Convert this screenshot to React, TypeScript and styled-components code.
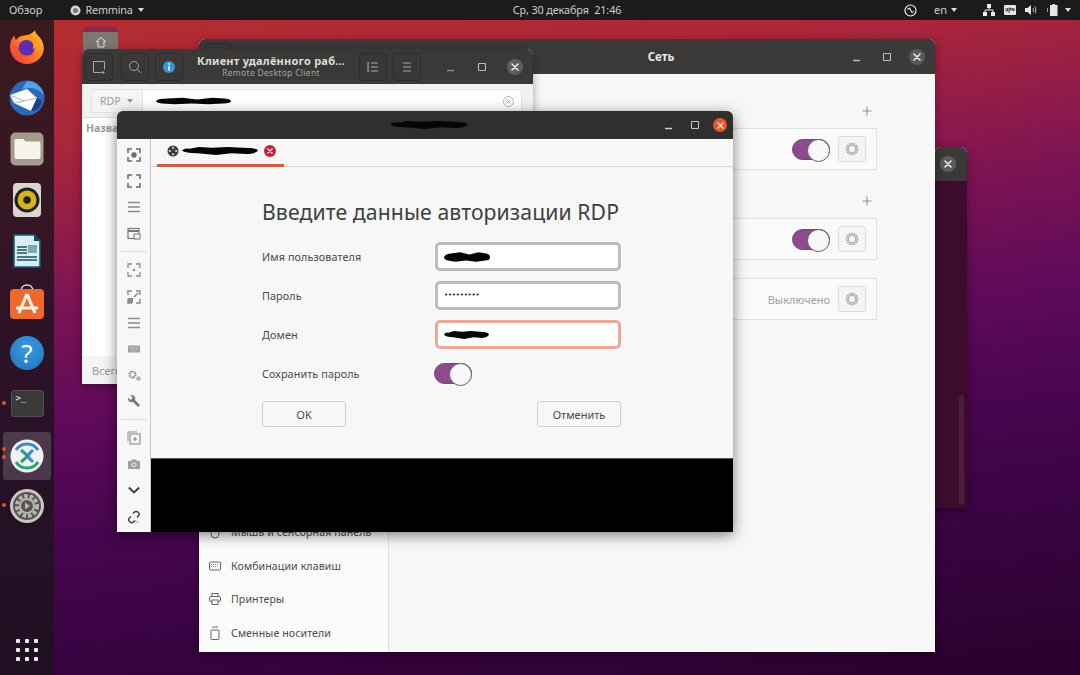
import React from "react";
import styled, { createGlobalStyle } from "styled-components";

const Global = createGlobalStyle`
  html, body { margin: 0; padding: 0; width: 1080px; height: 675px; overflow: hidden; background: #2c0028; }
  * { box-sizing: border-box; }
  #root { width: 1080px; height: 675px; }
`;

const Desktop = styled.div`
  position: relative; width: 1080px; height: 675px; overflow: hidden;
  display: flex; flex-direction: column;
  font-family: "Noto Sans", "Open Sans", sans-serif;
  background: linear-gradient(172deg, #b62f2c 0%, #ab263a 18%, #7e1453 37%, #5f0a5a 52%, #46054d 67%, #370340 82%, #29002b 100%);
`;

const TopBar = styled.div`
  height: 20px; flex: none; background: #1c1b1b; color: #cfcfcf; font-size: 11px;
  display: grid; grid-template-columns: 1fr auto 1fr; align-items: center; position: relative; z-index: 5;
`;
const BarLeft = styled.div`display: flex; align-items: center; padding-left: 9px;`;
const BarCenter = styled.div`padding-left: 54px; font-size: 10.8px; letter-spacing: -.1px; white-space: pre; line-height: 20px;`;
const BarRight = styled.div`display: flex; align-items: center; justify-content: flex-end; padding-right: 9px;`;
const BarItem = styled.span<{ $l?: number }>`
  margin-left: ${(p) => p.$l ?? 0}px; display: inline-flex; align-items: center; line-height: 20px; white-space: nowrap;
`;
const AppName = styled(BarItem)`font-size: 10.8px; letter-spacing: -.2px;`;
const Caret = styled.i<{ $l?: number; $c?: string }>`
  display: inline-block; margin-left: ${(p) => p.$l ?? 5}px; width: 0; height: 0;
  border-left: 3.5px solid transparent; border-right: 3.5px solid transparent; border-top: 4px solid ${(p) => p.$c ?? "#dcdcdc"};
`;

const Dock = styled.div`
  position: absolute; left: 0; top: 20px; bottom: 0; width: 54px; z-index: 4;
  background: rgba(28, 20, 28, 0.8);
  display: flex; flex-direction: column; align-items: center; padding-top: 1px;
`;
const DockSlot = styled.div`
  position: relative; width: 48px; height: 51px; display: flex; align-items: center; justify-content: center; flex: none;
`;
const ActiveTile = styled.div`
  width: 48px; height: 48px; margin-top: 2px; border-radius: 3px; background: rgba(255,255,255,.17);
  display: flex; align-items: center; justify-content: center;
`;
const RunDot = styled.i<{ $y: number }>`
  position: absolute; left: -1px; top: ${(p) => p.$y}px; width: 4px; height: 4px; border-radius: 50%; background: #d9552b;
`;
const AppGrid = styled.div`
  margin-top: auto; margin-bottom: 14px; display: grid; grid-template-columns: repeat(3, 4px); gap: 5px;
  & > i { width: 4px; height: 4px; background: #f2eeef; border-radius: 1px; }
`;

const Win = styled.div<{ $x: number; $y: number; $w: number; $h: number; $strong?: boolean }>`
  position: absolute; left: ${(p) => p.$x}px; top: ${(p) => p.$y}px; width: ${(p) => p.$w}px; height: ${(p) => p.$h}px;
  border-radius: 6px 6px 0 0; overflow: hidden; display: flex; flex-direction: column;
  box-shadow: ${(p) => (p.$strong ? "0 3px 14px rgba(0,0,0,.5)" : "0 2px 8px rgba(0,0,0,.35)")};
  background: #f7f7f7;
`;
const Head = styled.div<{ $h: number; $bg: string }>`
  height: ${(p) => p.$h}px; flex: none; background: ${(p) => p.$bg}; display: flex; align-items: center; position: relative;
  color: #eee;
`;
const HeadGap = styled.div`flex: 1;`;
const HeadBtn = styled.div<{ $l?: number }>`
  width: 28px; height: 28px; margin-left: ${(p) => p.$l ?? 0}px; border-radius: 4px; border: 1px solid #2d2c2b; background: #393836;
  display: flex; align-items: center; justify-content: center; flex: none;
`;
const Ctl = styled.div<{ $w: number; $bg?: string; $d?: number; $l?: number }>`
  width: ${(p) => p.$w}px; margin-left: ${(p) => p.$l ?? 0}px; display: flex; justify-content: center; align-items: center; flex: none;
  & > span {
    width: ${(p) => p.$d ?? 16}px; height: ${(p) => p.$d ?? 16}px; border-radius: 50%; background: ${(p) => p.$bg ?? "transparent"};
    display: flex; align-items: center; justify-content: center;
  }
`;

const TitleBlock = styled.div`
  flex: 1; text-align: center; line-height: 1.15; min-width: 0;
`;
const TitleMain = styled.div`font-size: 11px; font-weight: 700; color: #dedddb; letter-spacing: .25px; white-space: nowrap;`;
const TitleSub = styled.div`font-size: 8.5px; color: #a5a4a2; letter-spacing: .3px; margin-top: 1px;`;
const CenterTitle = styled.div`
  position: absolute; left: 0; right: 0; text-align: center; font-size: 11.5px; font-weight: 700; color: #e6e6e4; padding-left: 188px;
`;
const HeadRedact = styled.div`
  position: absolute; left: 273px; top: 9px; display: flex;
`;

/* Remmina main */
const RemBar = styled.div`
  height: 34px; flex: none; background: #f1f1f0; border-bottom: 1px solid #dcdcdc; padding: 5px 11px 4px 9px; display: flex;
`;
const Combo = styled.div`
  width: 52px; background: #f4f4f3; border: 1px solid #e3e3e3; border-radius: 3px 0 0 3px; color: #9c9c9c; font-size: 10.5px;
  display: flex; align-items: center; padding-left: 8px;
`;
const UrlBox = styled.div`
  flex: 1; background: #fff; border: 1px solid #e3e3e3; border-left: 0; border-radius: 0 3px 3px 0;
  display: flex; align-items: center; padding: 0 6px 0 13px; justify-content: space-between;
`;
const RemList = styled.div`flex: 1; background: #fff; padding: 3px 4px; `;
const RemCol = styled.div`font-size: 10.5px; font-weight: 700; color: #9a9a9a;`;
const RemFoot = styled.div`
  height: 28px; flex: none; background: #f4f4f3; color: #9a9a9a; font-size: 11px; padding: 0 10px; display: flex; align-items: center;
`;

/* Settings */
const SetBody = styled.div`flex: 1; display: flex; min-height: 0;`;
const Side = styled.div`
  width: 190px; flex: none; background: #fbfbfb; border-right: 1px solid #dedede;
  display: flex; flex-direction: column; justify-content: flex-end; padding-bottom: 2px;
`;
const SideItem = styled.div`
  height: 33.7px; display: flex; align-items: center; gap: 10px; padding-left: 10px; color: #4b4b4b; font-size: 10.6px; letter-spacing: .1px; white-space: nowrap;
`;
const SetMain = styled.div`
  flex: 1; background: #f7f7f7; padding: 29px 58px 0 58px; display: flex; flex-direction: column;
`;
const PlusRow = styled.div<{ $t?: number }>`
  height: 16px; margin-top: ${(p) => p.$t ?? 0}px; margin-bottom: 9px; display: flex; justify-content: flex-end; padding-right: 5px;
`;
const NetRow = styled.div<{ $t?: number }>`
  height: 42px; flex: none; margin-top: ${(p) => p.$t ?? 0}px; background: #fafafa; border: 1px solid #dfdfdf;
  display: flex; align-items: center; justify-content: flex-end; gap: 8px; padding-right: 10px;
`;
const Off = styled.span`font-size: 11px; color: #a0a0a0; margin-left: -1px;`;
const GearBtn = styled.div`
  width: 28px; height: 26px; background: #f5f5f5; border: 1px solid #dcdcdc; border-radius: 3px;
  display: flex; align-items: center; justify-content: center;
`;
const Toggle = styled.div`
  width: 38px; height: 21px; border-radius: 11px; background: #8e4a8e; border: 1px solid #6b4a6b; position: relative; flex: none;
  &::after {
    content: ""; position: absolute; right: -1px; top: -1px; width: 21px; height: 21px; border-radius: 50%;
    background: #f8f8f8; border: 1px solid #6b5a6b;
  }
`;
const FormToggle = styled(Toggle)`margin-left: -1px;`;

/* Terminal */
const TermBody = styled.div`flex: 1; background: #3d0b2c; display: flex; justify-content: flex-end; align-items: flex-end; padding: 0 3px 3px 0;`;
const TermScroll = styled.div`width: 5px; height: 110px; background: #4e1b3c; border-radius: 3px;`;

/* Remote window */
const Remote = styled.div`flex: 1; display: flex; min-height: 0;`;
const ToolRail = styled.div`
  width: 34px; flex: none; background: #f7f7f7; border-right: 1px solid #c9c9c9; display: flex; flex-direction: column; align-items: center; padding-top: 3px;
`;
const ToolBtn = styled.div`height: 26.2px; width: 100%; display: flex; align-items: center; justify-content: center; flex: none;`;
const ToolSep = styled.div`height: 1px; width: 26px; background: #dedede; margin: 4.5px 0 5px; flex: none;`;
const RemoteMain = styled.div`flex: 1; display: flex; flex-direction: column; min-width: 0;`;
const TabBar = styled.div`height: 28px; flex: none; background: #f7f7f7; border-bottom: 1px solid #d8d8d8; padding-left: 6px;`;
const Tab = styled.div`
  width: 127px; height: 28px; border-bottom: 3px solid #c9603a; display: flex; align-items: center; padding: 0 0 2px 10px; gap: 3px;
`;
const TabClose = styled.span`
  margin-left: 3px; width: 12px; height: 12px; border-radius: 50%; background: #c5213f; display: flex; align-items: center; justify-content: center;
`;
const FormWrap = styled.div`flex: 1; background: #f7f7f7; padding: 30px 112px 0 111px; display: flex; flex-direction: column;`;
const FormTitle = styled.h1`
  margin: 0 0 15px; font-size: 21.2px; line-height: 30px; font-weight: 400; color: #3f3f3f; white-space: nowrap; letter-spacing: .1px;
`;
const FormGrid = styled.div`display: grid; grid-template-columns: 173px 186px; grid-auto-rows: 29px; row-gap: 10px; align-items: center;`;
const Label = styled.label`font-size: 10.8px; color: #4a4a4a; letter-spacing: .1px; white-space: nowrap;`;
const Field = styled.div<{ $focus?: boolean }>`
  height: 29px; background: #fff; border: 3px solid ${(p) => (p.$focus ? "#e8ab96" : "#bdbdbd")}; border-radius: 5px;
  display: flex; align-items: center; padding-left: 6px;
`;
const Dots = styled.span`font-size: 7px; letter-spacing: -.2px; color: #222; line-height: 1; font-family: "DejaVu Sans", sans-serif;`;
const ButtonRow = styled.div`display: flex; justify-content: space-between; margin-top: 13px;`;
const Btn = styled.div`
  width: 84px; height: 26px; background: #f7f7f7; border: 1px solid #cfcfcf; border-radius: 3px; color: #4a4a4a; font-size: 11px;
  display: flex; align-items: center; justify-content: center;
`;
const Black = styled.div`height: 74px; flex: none; background: #000; border-top: 1px solid #555;`;

const HomeTile = styled.div`
  position: absolute; left: 83px; top: 27px; width: 35px; height: 30px; border-radius: 4px 4px 0 0; background: linear-gradient(#8a2a4a 0 5px, #7d7773 5px);
  display: flex; justify-content: center; padding-top: 9px;
`;
const ScribbleSvg = styled.svg`flex: none; display: block;`;

const Scribble = ({ w, h = 7, mid = false }: { w: number; h?: number; mid?: boolean }) => (
  <ScribbleSvg width={w} height={h} viewBox="0 0 100 10" preserveAspectRatio="none">
    <path
      d={mid
        ? "M0 5 Q3 2 10 3 L22 1 L40 2 L60 1 L80 2 Q98 2 100 5 Q98 8 85 9 L65 8 L45 10 L20 8 Q4 8 0 5Z"
        : "M0 5 Q4 2 15 2 L35 1 L55 3 L75 1 L92 2 Q100 3 100 5 Q100 8 90 8 L70 9 L48 8 L25 9 L8 8 Q0 7 0 5Z"}
      fill="#050505"
    />
  </ScribbleSvg>
);

const Close = ({ c = "#eee", s = 8 }: { c?: string; s?: number }) => (
  <svg width={s} height={s} viewBox="0 0 8 8"><path d="M1 1l6 6M7 1l-6 6" stroke={c} strokeWidth="1.5" strokeLinecap="round" /></svg>
);
const Min = ({ c = "#bbb" }: { c?: string }) => (
  <svg width="10" height="10" viewBox="0 0 10 10"><path d="M1 8.5h7" stroke={c} strokeWidth="1.4" /></svg>
);
const Max = ({ c = "#bbb" }: { c?: string }) => (
  <svg width="10" height="10" viewBox="0 0 10 10"><rect x="1.5" y="1.5" width="7" height="7" fill="none" stroke={c} strokeWidth="1.1" rx=".5" /></svg>
);
const Plus = () => (
  <svg width="10" height="16" viewBox="0 0 10 16"><path d="M5 3.5v9M.5 8h9" stroke="#8f8f8f" strokeWidth="1" /></svg>
);
const Gear = () => (
  <svg width="14" height="14" viewBox="0 0 14 14" fill="none">
    <circle cx="7" cy="7" r="5.4" stroke="#a3a3a3" strokeWidth="1.7" strokeDasharray="1.7 .7" />
    <circle cx="7" cy="7" r="3.8" stroke="#a3a3a3" strokeWidth="1" />
  </svg>
);

const tc = "#6d6d6d";
const Ti = ({ children }: { children: React.ReactNode }) => (
  <svg width="14" height="14" viewBox="0 0 14 14" fill="none" stroke={tc} strokeWidth="1.6">{children}</svg>
);
const Bars = () => (
  <Ti><path d="M1 2.5h12M1 7h12M1 11.5h12" stroke="#8b8b8b" strokeWidth="1.4" /></Ti>
);
const Corners = ({ gap = 5 }: { gap?: number }) => (
  <path d={`M1 ${gap}V1h4M9 1h4v4M13 9v4H9M5 13H1V9`} />
);

const Rail = () => (
  <ToolRail>
    <ToolBtn><Ti><Corners /><circle cx="7" cy="7" r="2.7" fill={tc} stroke="none" /></Ti></ToolBtn>
    <ToolBtn><Ti><Corners /></Ti></ToolBtn>
    <ToolBtn><Bars /></ToolBtn>
    <ToolBtn><Ti><rect x="1" y="1.5" width="11" height="10" stroke="#777" strokeWidth="1.2" /><path d="M1 4h11" stroke="#777" strokeWidth="2" /><rect x="7" y="7" width="6" height="5" fill="#f7f7f7" stroke="#777" strokeWidth="1" /></Ti></ToolBtn>
    <ToolSep />
    <ToolBtn><Ti><g stroke="#8b8b8b" strokeWidth="1.3"><Corners /></g><circle cx="7" cy="7" r="1.3" fill="#8b8b8b" stroke="none" /></Ti></ToolBtn>
    <ToolBtn><Ti><g stroke="#8b8b8b" strokeWidth="1.4"><Corners /></g><rect x="1" y="8" width="5" height="5" fill="#8b8b8b" stroke="none" /><path d="M7 7l4-4" stroke="#8b8b8b" /></Ti></ToolBtn>
    <ToolBtn><Bars /></ToolBtn>
    <ToolBtn><Ti><rect x="1" y="3.5" width="12" height="7" rx="1" fill="#9c9c9c" stroke="none" /><path d="M2.5 5.5h9M2.5 7h9M4 8.8h6" stroke="#ddd" strokeWidth=".8" strokeDasharray="1 .6" /></Ti></ToolBtn>
    <ToolBtn><Ti><circle cx="5.5" cy="6.5" r="3" stroke="#8b8b8b" strokeWidth="2.2" strokeDasharray="1.6 .7" /><circle cx="11.5" cy="10.5" r="1.5" stroke="#8b8b8b" strokeWidth="1.2" /></Ti></ToolBtn>
    <ToolBtn><Ti><path d="M1 3.500L3.500 6L5.800 3.800L3.200 1.200A3.700 3.700 0 0 1 8 6L13 11L11 13L6 8A3.700 3.700 0 0 1 1 3.500Z" fill="#7a7a7a" stroke="none" /></Ti></ToolBtn>
    <ToolSep />
    <ToolBtn><Ti><rect x="3" y="3" width="10" height="10" stroke="#8b8b8b" strokeWidth="1.1" /><path d="M1 10V1h9" stroke="#8b8b8b" strokeWidth="1" /><path d="M8 6v4M6 8h4" stroke="#8b8b8b" strokeWidth="1.2" /></Ti></ToolBtn>
    <ToolBtn><Ti><path d="M1 4h3l1-1.5h4L10 4h3v8H1z" fill="#a0a0a0" stroke="none" /><circle cx="7" cy="7.8" r="2" fill="#a0a0a0" stroke="#eee" strokeWidth="1" /></Ti></ToolBtn>
    <ToolBtn><Ti><path d="M1.8 4.500L7 9.500l5.200-5" stroke="#3e3e3e" strokeWidth="1.9" /></Ti></ToolBtn>
    <ToolBtn><Ti><path d="M6 3.500l1.200-1.200a2.800 2.800 0 0 1 4 4L10 7.500M4 6.500L2.600 7.800a2.800 2.800 0 0 0 4 4L8 10.500" stroke="#3e3e3e" strokeWidth="1.4" /><path d="M8 12l2-1M10 13.200l1.600-2" stroke="#888" strokeWidth=".8" /></Ti></ToolBtn>
  </ToolRail>
);

const Firefox = () => (
  <svg width="36" height="36" viewBox="0 0 36 36">
    <defs>
      <linearGradient id="ff1" x1="0" y1="1" x2="1" y2="0"><stop offset="0" stopColor="#ee2c3c" /><stop offset=".5" stopColor="#ff7a2b" /><stop offset="1" stopColor="#ffd22e" /></linearGradient>
    </defs>
    <path d="M26 1c0 4 5 6 7 11 3 6 2 13-2 17-3.500 4-8 6-13 6C8 35 1 27 1 18 1 13 2.500 9 5.500 6.500 5.500 8.500 6 10 7 11 9 8 12 6.500 15 6.500c4-.2 8-1.500 11-5.500z" fill="url(#ff1)" />
    <circle cx="17.500" cy="19" r="8" fill="#5d2fb0" />
    <path d="M9 14c3-4 9-5 13-2 3 2 3 6 1 8 4-1 6-6 3-11-4-4-12-4-17 5z" fill="#ff9a1e" />
    <path d="M4 17c1 7 7 12 14 11 5-.6 9-4 10-8-2 4-6 7-11 6.500C12 26 9 22 9 18z" fill="#f8542b" />
  </svg>
);
const Thunder = () => (
  <svg width="36" height="36" viewBox="0 0 36 36">
    <circle cx="18" cy="18" r="17.500" fill="#2a69b8" />
    <path d="M18 1c8 0 16 6 17 15-3-5-8-8-14-8-3 0-6 1-8 2 1-3 3-6 5-9z" fill="#4fa3e6" />
    <path d="M1 15l17-6 10 9-6 13-17-8z" fill="#fff" />
    <path d="M1 15l14 6 13-3M5 23l10-2" stroke="#aab6c8" strokeWidth="1" fill="none" />
    <path d="M22 31l6-13 5 3c-1 6-5 10-11 10z" fill="#1c3f83" />
  </svg>
);
const Files = () => (
  <svg width="34" height="34" viewBox="0 0 34 34">
    <rect x=".5" y=".5" width="33" height="33" rx="5" fill="#a59b8b" />
    <path d="M4.500 9a2 2 0 0 1 2-2h7l2 2.500h13a2 2 0 0 1 2 2V25a2 2 0 0 1-2 2h-22a2 2 0 0 1-2-2z" fill="#f6f3ec" />
  </svg>
);
const Rhythm = () => (
  <svg width="28" height="34" viewBox="0 0 28 34">
    <rect width="28" height="34" rx="4" fill="#d9d5cf" />
    <circle cx="14" cy="17" r="12.500" fill="#23211c" />
    <circle cx="14" cy="17" r="9.500" fill="#d5b31c" />
    <circle cx="14" cy="17" r="3.800" fill="#23211c" />
  </svg>
);
const Writer = () => (
  <svg width="28" height="34" viewBox="0 0 28 34">
    <path d="M1 1h20l6 6v26H1z" fill="#d8eef2" stroke="#1c5a70" strokeWidth="1.600" />
    <path d="M21 1v6h6z" fill="#18475f" />
    <path d="M4 13h10M4 16h10M4 19h10M4 23h20M4 26h20" stroke="#1c4f66" strokeWidth="1.400" />
    <rect x="15" y="11" width="9" height="8" fill="#7aa9bb" />
  </svg>
);
const Bag = () => (
  <svg width="34" height="36" viewBox="0 0 34 36">
    <path d="M11 7c0-8 12-8 12 0" fill="none" stroke="#e8e2dc" strokeWidth="1.600" />
    <rect y="5" width="34" height="30" rx="4" fill="#ed6a2c" />
    <path d="M17 10L9 29M17 10l8 19M6 24h22" stroke="#fdf1e6" strokeWidth="3.200" fill="none" />
  </svg>
);
const Help = styled.div`
  width: 34px; height: 34px; border-radius: 50%; background: radial-gradient(circle at 50% 35%, #3d9be0, #1f72bb);
  color: #fff; font-size: 26px; line-height: 34px; text-align: center;
`;
const Term = styled.div`
  width: 33px; height: 27px; background: #3a3a39; border-radius: 3px; color: #eee; font-size: 9px; line-height: 10px; padding: 2px 4px;
  font-family: "DejaVu Sans Mono", monospace; border: 1px solid #505050;
`;
const RemminaLogo = ({ s = 34 }: { s?: number }) => (
  <svg width={s} height={s} viewBox="0 0 34 34">
    <circle cx="17" cy="17" r="16.500" fill="#eef1f1" />
    <path d="M6 11a13 13 0 0 1 22 0" stroke="#3a86c8" strokeWidth="3" fill="none" />
    <path d="M28 23a13 13 0 0 1-22 0" stroke="#2aa46a" strokeWidth="3" fill="none" />
    <path d="M11 11l7 6-7 6" stroke="#2aa46a" strokeWidth="3" fill="none" />
    <path d="M23 11l-6 6 6 6" stroke="#3a86c8" strokeWidth="3" fill="none" />
  </svg>
);
const SettingsIcon = () => (
  <svg width="34" height="34" viewBox="0 0 34 34" fill="none">
    <circle cx="17" cy="17" r="17" fill="#c9c6c1" />
    <circle cx="17" cy="17" r="14" fill="#565451" />
    <circle cx="17" cy="17" r="10" stroke="#b9b6b1" strokeWidth="4" strokeDasharray="3.500 2" />
    <circle cx="17" cy="17" r="7" stroke="#b9b6b1" strokeWidth="2" />
    <path d="M15 13.500l5 3.500-5 3.500z" fill="#b9b6b1" />
  </svg>
);
const RemminaGlyph = () => (
  <svg width="11" height="11" viewBox="0 0 11 11">
    <circle cx="5.500" cy="5.500" r="5" fill="#d5d5d5" />
    <circle cx="5.500" cy="5.500" r="2.500" fill="#777" />
  </svg>
);

export default function App() {
  return (
    <Desktop>
      <Global />
      <TopBar>
        <BarLeft>
          <BarItem>Обзор</BarItem>
          <BarItem $l={27}><RemminaGlyph /></BarItem>
          <AppName $l={5}>Remmina<Caret /></AppName>
        </BarLeft>
        <BarCenter>Ср, 30 декабря  21:46</BarCenter>
        <BarRight>
          <BarItem>
            <svg width="13" height="13" viewBox="0 0 13 13" fill="none" stroke="#eee"><circle cx="6.500" cy="6.500" r="5.500" strokeWidth="1.200" /><path d="M3.500 5.500l2-1.500 2.500 4.500 1.500-1" strokeWidth="1.100" /></svg>
          </BarItem>
          <BarItem $l={17}>en<Caret $l={4} /></BarItem>
          <BarItem $l={26}>
            <svg width="12" height="12" viewBox="0 0 12 12" fill="#eee"><rect x="4" y="0" width="4" height="4" /><rect x="0" y="8" width="4" height="4" /><rect x="8" y="8" width="4" height="4" /><path d="M6 4v2M2 8V6h8v2" stroke="#eee" fill="none" /></svg>
          </BarItem>
          <BarItem $l={9}>
            <svg width="12" height="10" viewBox="0 0 12 10"><rect width="12" height="10" rx="1" fill="#e6e6e6" /><path d="M2 3v3h1.500V3M5 3v5M5 3h1.500v2H5M8 6V3l2 3V3" stroke="#222" strokeWidth=".8" fill="none" /></svg>
          </BarItem>
          <BarItem $l={9}>
            <svg width="12" height="10" viewBox="0 0 12 10" fill="none"><path d="M0 3h2.500L6 0v10L2.500 7H0z" fill="#e6e6e6" /><path d="M8 3q1 2 0 4M10 1.500q2 3.500 0 7" stroke="#bbb" /></svg>
          </BarItem>
          <BarItem $l={9}>
            <svg width="12" height="12" viewBox="0 0 12 12" fill="none"><rect x="4.500" y="1.500" width="6.500" height="10" fill="#e6e6e6" stroke="#e6e6e6" /><rect x="6.500" y="0" width="2.500" height="1.500" fill="#e6e6e6" /><path d="M1.500 4v4" stroke="#999" /></svg>
          </BarItem>
          <Caret $l={7} />
        </BarRight>
      </TopBar>

      <HomeTile>
        <svg width="12" height="12" viewBox="0 0 12 12" fill="none" stroke="#e6e6e6"><path d="M1 6l5-4.500L11 6M3 5v6h6V5" /></svg>
      </HomeTile>

      <Win $x={935} $y={147} $w={32} $h={361}>
        <Head $h={34} $bg="#3a3937">
          <Ctl $w={26} $bg="#5c5b59" $d={16}><span><Close /></span></Ctl>
        </Head>
        <TermBody><TermScroll /></TermBody>
      </Win>

      <Win $x={199} $y={39} $w={736} $h={613}>
        <Head $h={35} $bg="#3b3a38">
          <HeadBtn $l={5} />
          <CenterTitle>Сеть</CenterTitle>
          <HeadGap />
          <Ctl $w={30}><span><Min /></span></Ctl>
          <Ctl $w={30}><span><Max /></span></Ctl>
          <Ctl $w={30} $bg="#5c5b59"><span><Close /></span></Ctl>
          <Ctl $w={3} />
        </Head>
        <SetBody>
          <Side>
            <SideItem>
              <svg width="12" height="14" viewBox="0 0 12 14" fill="none" stroke="#666"><rect x="2" y="1" width="8" height="12" rx="4" /></svg>
              Мышь и сенсорная панель
            </SideItem>
            <SideItem>
              <svg width="12" height="14" viewBox="0 0 12 14" fill="none" stroke="#666"><rect x=".5" y="3" width="11" height="8" rx="1" /><path d="M2 5.500h8M2 7.500h8" strokeDasharray="1 1" strokeWidth=".8" /></svg>
              Комбинации клавиш
            </SideItem>
            <SideItem>
              <svg width="12" height="14" viewBox="0 0 12 14" fill="none" stroke="#666"><rect x="3" y="1.500" width="6" height="3" /><rect x=".5" y="4.500" width="11" height="5" rx="1.500" /><rect x="3" y="8" width="6" height="4.500" fill="#fbfbfb" /></svg>
              Принтеры
            </SideItem>
            <SideItem>
              <svg width="12" height="14" viewBox="0 0 12 14" fill="none" stroke="#666"><rect x="2" y="4" width="8" height="9.500" rx="1" /><path d="M3 1h6" /></svg>
              Сменные носители
            </SideItem>
          </Side>
          <SetMain>
            <PlusRow><Plus /></PlusRow>
            <NetRow><Toggle /><GearBtn><Gear /></GearBtn></NetRow>
            <PlusRow $t={23}><Plus /></PlusRow>
            <NetRow><Toggle /><GearBtn><Gear /></GearBtn></NetRow>
            <NetRow $t={18}><Off>Выключено</Off><GearBtn><Gear /></GearBtn></NetRow>
          </SetMain>
        </SetBody>
      </Win>

      <Win $x={82} $y={49} $w={451} $h={335}>
        <Head $h={35} $bg="#3a3937">
          <HeadBtn $l={3}>
            <svg width="14" height="14" viewBox="0 0 14 14" fill="none" stroke="#a9a8a6"><path d="M9.500 12.500h-8v-11h11v8" /><path d="M11 11v3M9.500 12.500h3" /></svg>
          </HeadBtn>
          <HeadBtn $l={8}>
            <svg width="14" height="14" viewBox="0 0 14 14" fill="none" stroke="#a9a8a6"><circle cx="6" cy="6" r="4.500" /><path d="M9.500 9.500l3.500 3.500" /></svg>
          </HeadBtn>
          <HeadBtn $l={6}>
            <svg width="14" height="14" viewBox="0 0 14 14"><circle cx="7" cy="7" r="6" fill="#3f92dc" /><path d="M7 6v4.500M7 3.200v1.500" stroke="#fff" strokeWidth="1.600" /></svg>
          </HeadBtn>
          <TitleBlock>
            <TitleMain>Клиент удалённого раб…</TitleMain>
            <TitleSub>Remote Desktop Client</TitleSub>
          </TitleBlock>
          <HeadBtn>
            <svg width="14" height="14" viewBox="0 0 14 14" fill="none" stroke="#a9a8a6"><path d="M2 2v10M2 3h1M2 7h1M2 11h1M5 3h7M5 7h7M5 11h7" /></svg>
          </HeadBtn>
          <HeadBtn $l={6}>
            <svg width="14" height="14" viewBox="0 0 14 14" fill="none" stroke="#a9a8a6"><path d="M3 3h8M3 7h8M3 11h8" /></svg>
          </HeadBtn>
          <Ctl $w={28} $l={16}><span><Min c="#8f8e8c" /></span></Ctl>
          <Ctl $w={33}><span><Max /></span></Ctl>
          <Ctl $w={33} $bg="#5f5e5c"><span><Close /></span></Ctl>
          <Ctl $w={2} />
        </Head>
        <RemBar>
          <Combo>RDP<Caret $l={6} $c="#999" /></Combo>
          <UrlBox>
            <Scribble w={75} h={8} />
            <svg width="13" height="13" viewBox="0 0 13 13" fill="none" stroke="#b5b5b5"><circle cx="6.500" cy="6.500" r="5" /><path d="M4.500 4.500l4 4M8.500 4.500l-4 4" /></svg>
          </UrlBox>
        </RemBar>
        <RemList><RemCol>Название</RemCol></RemList>
        <RemFoot>Всего</RemFoot>
      </Win>

      <Win $x={117} $y={111} $w={616} $h={421} $strong>
        <Head $h={28} $bg="#302f2d">
          <HeadGap />
          <HeadRedact><Scribble w={78} h={9} mid /></HeadRedact>
          <Ctl $w={24}><span><Min c="#d0d0d0" /></span></Ctl>
          <Ctl $w={28}><span><Max c="#c5c5c5" /></span></Ctl>
          <Ctl $w={22} $bg="#e0592a" $d={14}><span><Close s={7} /></span></Ctl>
          <Ctl $w={2} />
        </Head>
        <Remote>
          <Rail />
          <RemoteMain>
            <TabBar>
              <Tab>
                <svg width="12" height="12" viewBox="0 0 12 12"><circle cx="6" cy="6" r="5.500" fill="#3e3e3e" /><circle cx="6" cy="2.800" r="1" fill="#eee" /><circle cx="6" cy="9.200" r="1" fill="#eee" /><circle cx="2.800" cy="6" r="1" fill="#eee" /><circle cx="9.200" cy="6" r="1" fill="#eee" /></svg>
                <Scribble w={76} h={9} mid />
                <TabClose><Close s={6} /></TabClose>
              </Tab>
            </TabBar>
            <FormWrap>
              <FormTitle>Введите данные авторизации RDP</FormTitle>
              <FormGrid>
                <Label>Имя пользователя</Label>
                <Field><Scribble w={46} h={12} /></Field>
                <Label>Пароль</Label>
                <Field><Dots>•••••••••</Dots></Field>
                <Label>Домен</Label>
                <Field $focus><Scribble w={45} h={9} mid /></Field>
                <Label>Сохранить пароль</Label>
                <FormToggle />
              </FormGrid>
              <ButtonRow>
                <Btn>OK</Btn>
                <Btn>Отменить</Btn>
              </ButtonRow>
            </FormWrap>
            <Black />
          </RemoteMain>
        </Remote>
      </Win>

      <Dock>
        <DockSlot><Firefox /></DockSlot>
        <DockSlot><Thunder /></DockSlot>
        <DockSlot><Files /></DockSlot>
        <DockSlot><Rhythm /></DockSlot>
        <DockSlot><Writer /></DockSlot>
        <DockSlot><Bag /></DockSlot>
        <DockSlot><Help>?</Help></DockSlot>
        <DockSlot><RunDot $y={23} /><Term>{">_"}</Term></DockSlot>
        <DockSlot><RunDot $y={18} /><RunDot $y={26} /><ActiveTile><RemminaLogo /></ActiveTile></DockSlot>
        <DockSlot><RunDot $y={23} /><SettingsIcon /></DockSlot>
        <AppGrid>{Array.from({ length: 9 }, (_, i) => <i key={i} />)}</AppGrid>
      </Dock>
    </Desktop>
  );
}
